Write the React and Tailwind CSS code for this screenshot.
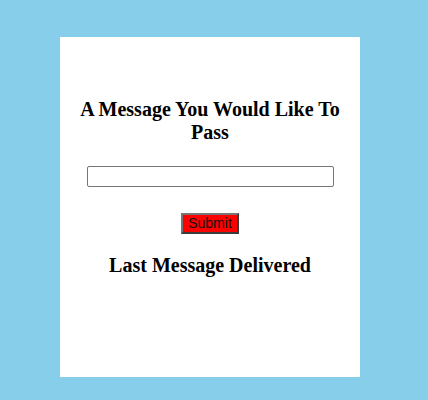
export default function App() {
  return (
    <div className="min-h-screen w-full bg-[#87ceeb] pt-[37px]">
      <div className="ml-[60px] flex h-[340px] w-[300px] flex-col items-center bg-white px-5 pt-[61px] font-['Liberation_Serif',serif]">
        <h2 className="w-full text-center text-[20px] font-bold leading-[23px] text-black">
          A Message You Would Like To Pass
        </h2>
        <input
          type="text"
          className="mt-[22px] h-[21px] w-[247px] rounded-[2px] border border-[#767676] bg-white px-[2px] font-['Liberation_Sans',sans-serif] text-[13px] outline-none"
        />
        <button
          type="button"
          className="mt-[26px] h-[21px] w-[58px] border-2 border-t-[#767676] border-l-[#767676] border-r-[#3c3c3c] border-b-[#3c3c3c] bg-[#ff0000] font-['Liberation_Sans',sans-serif] text-[14px] leading-[15px] text-[#111]"
        >
          Submit
        </button>
        <h2 className="mt-[20px] w-full text-center text-[20px] font-bold leading-[23px] text-black">
          Last Message Delivered
        </h2>
      </div>
    </div>
  );
}
